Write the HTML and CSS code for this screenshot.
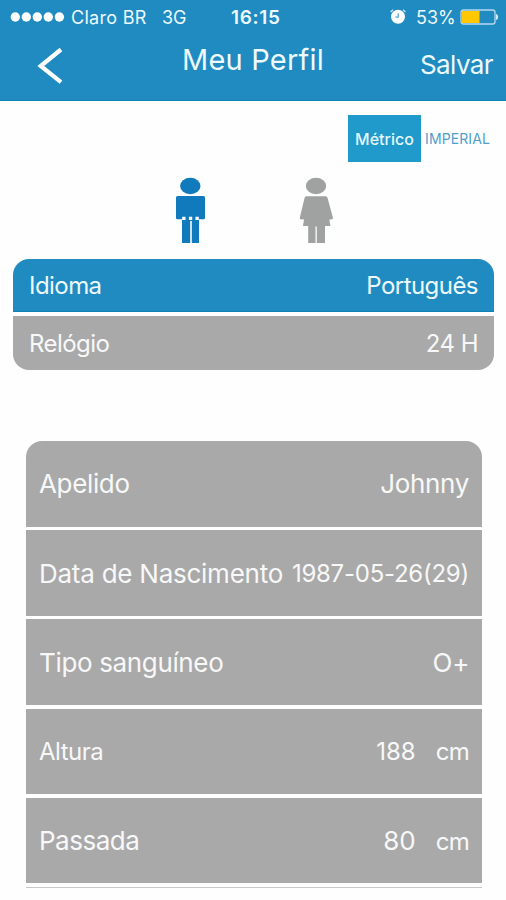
FILE: index.html
```html
<!DOCTYPE html>
<html lang="pt-BR">
<head>
<meta charset="utf-8">
<title>Meu Perfil</title>
<link rel="stylesheet" href="styles.css">
</head>
<body>
<header class="header">
  <div class="status">
    <svg class="signal" width="56" height="12" viewBox="0 0 56 12" fill="#fff"><circle cx="5.3" cy="6" r="4.7"/><circle cx="16.3" cy="6" r="4.7"/><circle cx="27.3" cy="6" r="4.7"/><circle cx="38.3" cy="6" r="4.7"/><circle cx="49.4" cy="6" r="4.7"/></svg>
    <span class="carrier">Claro BR</span>
    <span class="network">3G</span>
    <span class="clock">16:15</span>
    <svg class="alarm" width="18" height="18" viewBox="0 0 18 18"><circle cx="9" cy="8.8" r="7" fill="#fff"/><path d="M1.6 4 4 1.8M14 1.8 16.4 4" stroke="#c4e4f5" stroke-width="1.4"/><path d="M9.2 5.4V9.2H6.4" fill="none" stroke="#4fa5d0" stroke-width="1.3"/></svg>
    <span class="percent">53%</span>
    <svg class="battery" width="40" height="18" viewBox="0 0 40 18"><rect x="1" y="2" width="34" height="14" rx="2.3" fill="none" stroke="#b5d8ef" stroke-width="1.3"/><path d="M2 3H19.5V15H2z" fill="#ffc800"/><path d="M36 5.8q2.2 1 2.2 3.2t-2.2 3.2z" fill="#d3ecf9"/></svg>
  </div>
  <nav class="nav">
    <svg class="back" width="28" height="40" viewBox="0 0 28 40"><path d="M24 3.5 3.7 20 24 36.2" fill="none" stroke="#fff" stroke-width="4.2"/></svg>
    <h1 class="title">Meu Perfil</h1>
    <span class="save">Salvar</span>
  </nav>
</header>
<main>
  <div class="units">
    <span class="unit unit-active"><span class="metric">Métrico</span></span>
    <span class="unit"><span class="imperial">IMPERIAL</span></span>
  </div>
  <div class="genders">
    <svg width="30" height="68" viewBox="0 0 30 68" fill="#107abd"><ellipse cx="15.3" cy="9" rx="10.2" ry="8.2"/><path d="M2.5 19h26q1.5 0 1.5 1.5V41q0 1.2-1.2 1.2H24V66H16.8V44h-1.6v22H7V42.2H2.2Q1 42.2 1 41V20.5Q1 19 2.5 19z"/><path d="M7.2 39.7h3.3v3.2H7.2zM13.9 39.7h3.3v3.2h-3.3zM20.5 39.7h3.3v3.2h-3.3z" fill="#fff"/></svg>
    <svg width="34" height="68" viewBox="0 0 34 68" fill="#a0a2a1"><ellipse cx="17" cy="9" rx="10.2" ry="8.2"/><path d="M7.5 19.2h19q1.7 0 2 1.5L34 41q0 1-1 1.2l-2.6.3 1 6.5H26V66H17.8V49.5h-1.3V66H9.2V49H4l1-6.5-3.2-.3Q.5 42 .8 40.8L5.6 20.7q.3-1.5 1.9-1.5z"/></svg>
  </div>
  <section class="card settings">
    <div class="row row-active"><span class="idioma">Idioma</span><span class="portugues">Português</span></div>
    <div class="row"><span class="relogio">Relógio</span><span class="hours">24 H</span></div>
  </section>
  <section class="card profile">
    <div class="row"><span class="apelido">Apelido</span><span class="johnny">Johnny</span></div>
    <div class="row"><span class="nascimento">Data de Nascimento</span><span class="date">1987-05-26(29)</span></div>
    <div class="row"><span class="sangue">Tipo sanguíneo</span><span class="blood">O+</span></div>
    <div class="row"><span class="altura">Altura</span><span class="measure"><span class="height">188</span><span class="cm">cm</span></span></div>
    <div class="row"><span class="passada">Passada</span><span class="measure"><span class="step">80</span><span class="cm">cm</span></span></div>
    <div class="row next"></div>
  </section>
</main>
</body>
</html>
```
FILE: styles.css
```css
* { box-sizing: border-box; }
body {
  margin: 0;
  height: 900px;
  overflow: hidden;
  background: #fefefe;
  color: #f8f8f8;
  font-family: Inter, "Liberation Sans", sans-serif;
  white-space: nowrap;
}
svg { display: block; flex: none; }
.header {
  height: 101px;
  background: #1f8bc1;
  border-bottom: 1px solid #0d80b6;
  color: #eefaff;
}
.status {
  display: flex;
  align-items: center;
  height: 34px;
  padding-left: 10px;
  font-size: 18px;
}
.carrier { width: 92px; padding-left: 5px; letter-spacing: 0.3px; }
.network { width: 73px; padding-left: 4px; }
.clock { width: 158px; font-size: 19px; font-weight: 600; letter-spacing: 0.7px; }
.percent { width: 44px; margin-left: 9px; }
.nav {
  display: grid;
  grid-template-columns: 145px 1fr 145px;
  height: 66px;
}
.back { margin: 12px 0 0 37px; }
.title {
  margin: 10px 0 0;
  font-size: 29px;
  line-height: 32px;
  font-weight: 400;
  letter-spacing: 0.2px;
  text-align: center;
}
.save {
  margin-top: 15px;
  padding-right: 13px;
  font-size: 26px;
  line-height: 32px;
  letter-spacing: -0.6px;
  text-align: right;
}
.units {
  display: flex;
  justify-content: flex-end;
  height: 47px;
  margin: 14px 12px 0 0;
}
.unit {
  display: flex;
  align-items: center;
  justify-content: center;
  width: 73px;
  color: #519fc8;
  font-size: 14px;
}
.imperial { letter-spacing: 0.1px; }
.unit-active { background: #1f9aca; color: #e6f8ff; font-size: 16px; font-weight: 500; }
.genders {
  display: flex;
  gap: 94px;
  margin: 15px 0 0 175px;
}
.card { display: grid; gap: 4px; overflow: hidden; }
.settings {
  grid-template-rows: 53px 54px;
  margin: 14px 12px 0 13px;
  border-radius: 16px;
  font-size: 24px;
  letter-spacing: -0.55px;
}
.row {
  display: flex;
  align-items: center;
  justify-content: space-between;
  padding: 0 16px;
  background: #a9a9a9;
}
.row-active { background: #1f8bc1; border-bottom: 1px solid #0d80b6; color: #eefaff; }
.idioma, .portugues { padding-top: 1px; }
.profile {
  grid-template-rows: repeat(5, 85.7px) 1px;
  gap: 3.5px;
  margin: 71px 24px 0 26px;
  border-radius: 16px 16px 0 0;
  font-size: 26px;
  letter-spacing: -0.35px;
}
.profile .row { padding: 0 13px; }
.profile .next { background: #c8c8c8; }
.date, .altura, .height, .cm { font-size: 24px; }
.nascimento, .date { letter-spacing: -0.25px; }
.altura, .passada { letter-spacing: -0.5px; }
.height, .step { letter-spacing: 0; }
.cm { letter-spacing: -0.7px; }
.measure { display: flex; align-items: baseline; gap: 20px; }
```
